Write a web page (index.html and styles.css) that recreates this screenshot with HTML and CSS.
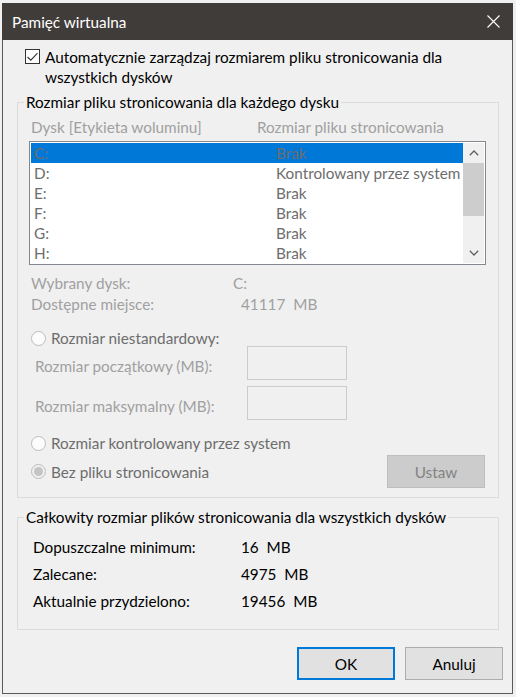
FILE: index.html
```html
<!DOCTYPE html>
<html lang="pl">
<head>
<meta charset="utf-8">
<title>Pamięć wirtualna</title>
<link rel="stylesheet" href="styles.css">
</head>
<body>
<div class="dialog">
  <div class="titlebar">
    <span class="title">Pamięć wirtualna</span>
    <span class="close">
      <svg width="13" height="13" viewBox="0 0 13 13"><path d="M0.5 0.5 L12.5 12.5 M12.5 0.5 L0.5 12.5" stroke="#ffffff" stroke-width="1.1" fill="none"/></svg>
    </span>
  </div>
  <div class="content">
    <div class="auto">
      <span class="checkbox"><svg width="13" height="13" viewBox="0 0 13 13"><path d="M1.5 7 L4.8 10.2 L11.5 3.2" stroke="#333333" stroke-width="1.1" fill="none"/></svg></span>
      <span class="auto-text">Automatycznie zarządzaj rozmiarem pliku stronicowania dla<br>wszystkich dysków</span>
    </div>

    <fieldset class="group group-drives">
      <legend>Rozmiar pliku stronicowania dla każdego dysku</legend>
      <div class="list-head"><span class="h1">Dysk [Etykieta woluminu]</span><span class="h2">Rozmiar pliku stronicowania</span></div>
      <div class="listbox">
        <div class="rows">
          <div class="row selected"><span class="c1">C:</span><span class="c2">Brak</span></div>
          <div class="row"><span class="c1">D:</span><span class="c2">Kontrolowany przez system</span></div>
          <div class="row"><span class="c1">E:</span><span class="c2">Brak</span></div>
          <div class="row"><span class="c1">F:</span><span class="c2">Brak</span></div>
          <div class="row"><span class="c1">G:</span><span class="c2">Brak</span></div>
          <div class="row"><span class="c1">H:</span><span class="c2">Brak</span></div>
        </div>
        <div class="scrollbar">
          <div class="sb-btn"><svg width="10" height="6" viewBox="0 0 10 6"><path d="M0.8 5.2 L5 1 L9.2 5.2" stroke="#606060" stroke-width="1.3" fill="none"/></svg></div>
          <div class="sb-track"><div class="sb-thumb"></div></div>
          <div class="sb-btn"><svg width="10" height="6" viewBox="0 0 10 6"><path d="M0.8 0.8 L5 5 L9.2 0.8" stroke="#606060" stroke-width="1.3" fill="none"/></svg></div>
        </div>
      </div>

      <div class="info">
        <div class="info-row"><span class="info-label">Wybrany dysk:</span><span>C:</span></div>
        <div class="info-row"><span class="info-label">Dostępne miejsce:</span><span class="v2">41117&nbsp; MB</span></div>
      </div>

      <div class="radio-row r1"><span class="radio"></span><span>Rozmiar niestandardowy:</span></div>
      <div class="field-row f1"><span class="field-label">Rozmiar początkowy (MB):</span><span class="edit"></span></div>
      <div class="field-row f2"><span class="field-label">Rozmiar maksymalny (MB):</span><span class="edit"></span></div>
      <div class="radio-row r2"><span class="radio"></span><span>Rozmiar kontrolowany przez system</span></div>
      <div class="radio-row r3"><span class="radio checked"></span><span>Bez pliku stronicowania</span><span class="btn btn-disabled">Ustaw</span></div>
    </fieldset>

    <fieldset class="group group-total">
      <legend>Całkowity rozmiar plików stronicowania dla wszystkich dysków</legend>
      <div class="total-row"><span class="total-label">Dopuszczalne minimum:</span><span>16&nbsp; MB</span></div>
      <div class="total-row"><span class="total-label">Zalecane:</span><span>4975&nbsp; MB</span></div>
      <div class="total-row"><span class="total-label">Aktualnie przydzielono:</span><span>19456&nbsp; MB</span></div>
    </fieldset>

    <div class="buttons">
      <span class="btn btn-default">OK</span>
      <span class="btn">Anuluj</span>
    </div>
  </div>
</div>
</body>
</html>
```

FILE: styles.css
```css
html, body {
  margin: 0;
  padding: 0;
}
body {
  background: #f0f0f0;
  font-family: Lato, "Noto Sans", sans-serif;
  font-size: 15.3px;
  color: #000;
  overflow: hidden;
}
.dialog {
  margin: 3px 0 0 2px;
  width: 511px;
  height: 691px;
  box-sizing: border-box;
  border: 1px solid #5a5a5a;
  border-top: 0;
  background: #f0f0f0;
}
.titlebar {
  height: 37px;
  background: #403c3a;
  color: #ffffff;
  display: flex;
  align-items: center;
  padding: 0 13px 0 10px;
  margin: 0 -1px;
}
.title {
  line-height: 20px;
  padding-top: 1px;
}
.close {
  margin-left: auto;
  width: 13px;
  height: 13px;
  display: flex;
}
.content {
  padding: 7px 13px 0 14px;
}
.auto {
  display: flex;
  align-items: flex-start;
  line-height: 20px;
  padding-left: 8px;
}
.checkbox {
  flex: none;
  width: 15px;
  height: 15px;
  box-sizing: border-box;
  border: 1px solid #333333;
  background: #ffffff;
  margin: 2px 5px 0 0;
  display: flex;
}
.group {
  margin: 5px 0 0;
  padding: 5px 0 9px;
  border: 1px solid #dcdcdc;
  min-width: 0;
}
.group legend {
  margin-left: 6px;
  padding: 0 2px;
  line-height: 20px;
}
.list-head {
  display: flex;
  padding-left: 13px;
  line-height: 20px;
  color: #a0a0a0;
}
.list-head .h1 {
  width: 226px;
}
.listbox {
  margin: 4px 0 0 11px;
  width: 457px;
  box-sizing: border-box;
  border: 1px solid #828790;
  padding: 1px;
  background: #ffffff;
  display: flex;
}
.rows {
  flex: 1;
}
.row {
  display: flex;
  height: 20px;
  line-height: 20px;
  padding-left: 3px;
  color: #6d6d6d;
}
.row.selected {
  background: #0078d7;
}
.row .c1 {
  width: 242px;
}
.scrollbar {
  width: 21px;
  display: flex;
  flex-direction: column;
  background: #f0f0f0;
}
.sb-btn {
  height: 20px;
  display: flex;
  align-items: center;
  justify-content: center;
}
.sb-track {
  flex: 1;
}
.sb-thumb {
  height: 53px;
  background: #cdcdcd;
}
.info {
  margin-top: 8px;
  padding-left: 13px;
  line-height: 21px;
  color: #a0a0a0;
}
.info-row {
  display: flex;
}
.info-label {
  width: 202px;
}
.info-row .v2 {
  padding-left: 8px;
}
.radio-row {
  display: flex;
  align-items: center;
  height: 20px;
  line-height: 20px;
  padding-left: 13px;
  color: #6d6d6d;
}
.radio-row.r1 {
  margin-top: 13px;
}
.radio-row.r2 {
  margin-top: 13px;
}
.radio-row.r3 {
  margin-top: 2px;
  height: 33px;
}
.radio {
  flex: none;
  width: 15px;
  height: 15px;
  box-sizing: border-box;
  border-radius: 50%;
  border: 1px solid #bcbcbc;
  background: #fcfcfc;
  margin-right: 5px;
  display: flex;
  align-items: center;
  justify-content: center;
}
.radio.checked {
  background: #f0f0f0;
}
.radio.checked::after {
  content: "";
  width: 9px;
  height: 9px;
  border-radius: 50%;
  background: #c4c4c4;
}
.field-row {
  display: flex;
  align-items: flex-start;
  padding-left: 17px;
}
.field-row.f1 {
  margin-top: -2px;
}
.field-row.f2 {
  margin-top: 6px;
}
.field-label {
  width: 212px;
  padding-top: 10px;
  line-height: 20px;
  color: #a0a0a0;
}
.edit {
  width: 100px;
  height: 34px;
  box-sizing: border-box;
  border: 1px solid #cccccc;
  background: #f0f0f0;
}
.btn {
  width: 98px;
  height: 33px;
  box-sizing: border-box;
  border: 1px solid #adadad;
  background: #e1e1e1;
  display: flex;
  align-items: center;
  justify-content: center;
  line-height: 20px;
  color: #000;
}
.btn-disabled {
  margin-left: auto;
  margin-right: 13px;
  background: #cccccc;
  border-color: #bfbfbf;
  color: #838383;
}
.btn-default {
  border: 2px solid #0078d7;
}
.group-total {
  margin-top: 9px;
  padding: 10px 0 18px;
}
.total-row {
  display: flex;
  padding-left: 15px;
  line-height: 20px;
}
.total-row + .total-row {
  margin-top: 7px;
}
.total-label {
  width: 208px;
}
.buttons {
  display: flex;
  justify-content: flex-end;
  gap: 10px;
  margin: 17px -4px 0 0;
}
```
